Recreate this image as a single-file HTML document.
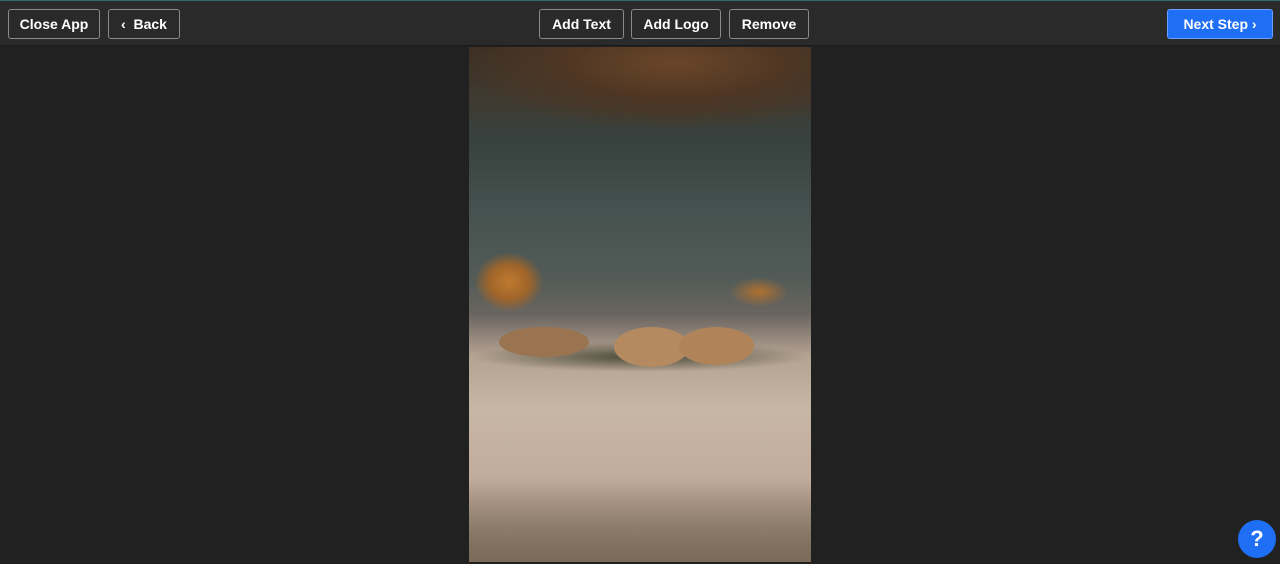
<!DOCTYPE html>
<html><head><style>
body{margin:0;width:1280px;height:564px;background:#212121;font-family:"Liberation Sans",sans-serif;overflow:hidden;position:relative}
.top{position:absolute;left:0;top:0;width:1280px;height:46px;background:#2a2a2a;border-top:1px solid #2f6b6b;box-sizing:border-box;border-bottom:1px solid #1a1a1a}
.b{position:absolute;top:8px;height:30px;box-sizing:border-box;border:1px solid #8a8a8a;border-radius:3px;background:#2a2a2a;color:#fff;font-size:14px;font-weight:bold;line-height:28px;text-align:center}
.n{background:#1f6ff5;border-color:#6aa0ff}
.img{position:absolute;left:469px;top:47px;width:342px;height:515px;overflow:hidden;
background:linear-gradient(180deg,#3a2e24 0%,#3e3a30 10%,#37423f 18%,#46524f 32%,#525b57 45%,#6b6560 52%,#b5a392 60%,#c8b6a4 70%,#c0ac9a 85%,#9a8674 100%)}
.q{position:absolute;left:1238px;top:520px;width:38px;height:38px;border-radius:50%;background:#1f6ff5;color:#fff;font-weight:bold;font-size:22px;text-align:center;line-height:38px}
</style></head><body>
<div class="top">
<div class="b" style="left:8px;width:92px">Close App</div>
<div class="b" style="left:108px;width:72px">&#8249;&nbsp; Back</div>
<div class="b" style="left:539px;width:85px">Add Text</div>
<div class="b" style="left:631px;width:90px">Add Logo</div>
<div class="b" style="left:729px;width:80px">Remove</div>
<div class="b n" style="left:1167px;width:106px">Next Step &#8250;</div>
</div>
<div class="img">
<div style="position:absolute;left:0;top:0;width:342px;height:80px;background:radial-gradient(ellipse at 60% 20%,#6a4628 0%,#4e3624 40%,transparent 75%)"></div>
<div style="position:absolute;left:5px;top:205px;width:70px;height:60px;background:radial-gradient(ellipse,#c07a30 0%,#a0652a 40%,transparent 70%)"></div>
<div style="position:absolute;left:260px;top:230px;width:60px;height:30px;background:radial-gradient(ellipse,#b07030 0%,transparent 70%)"></div>
<div style="position:absolute;left:0;top:295px;width:342px;height:30px;background:radial-gradient(ellipse,#4a4a3a 0%,transparent 70%)"></div>
<div style="position:absolute;left:30px;top:280px;width:90px;height:30px;border-radius:50%;background:#9a7450"></div>
<div style="position:absolute;left:145px;top:280px;width:75px;height:40px;border-radius:50%;background:#b58a60"></div>
<div style="position:absolute;left:210px;top:280px;width:75px;height:38px;border-radius:50%;background:#b08458"></div>
<div style="position:absolute;left:0;top:430px;width:342px;height:85px;background:linear-gradient(180deg,transparent,#7a6a5a)"></div>
</div>
<div class="q">?</div>
</body></html>
